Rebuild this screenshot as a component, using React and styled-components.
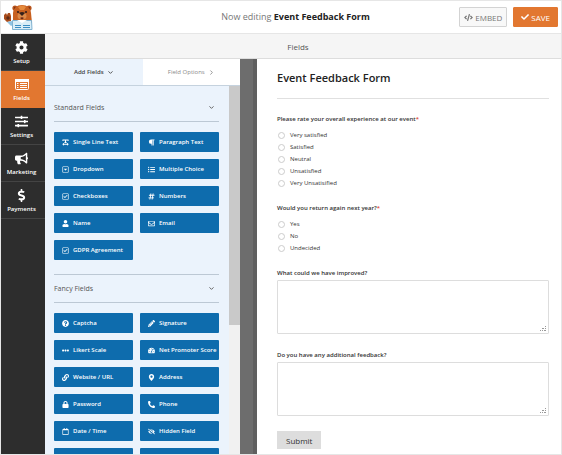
import React from 'react'
import styled, { createGlobalStyle } from 'styled-components'
import {
  FaBullhorn,
  FaCheck,
  FaCode,
  FaCog,
  FaDollarSign,
  FaEllipsisH,
  FaEyeSlash,
  FaHashtag,
  FaLink,
  FaListUl,
  FaLock,
  FaMapMarkerAlt,
  FaParagraph,
  FaPencilAlt,
  FaPhoneAlt,
  FaQuestionCircle,
  FaRegCalendar,
  FaRegCaretSquareDown,
  FaRegCheckSquare,
  FaRegEnvelope,
  FaSlidersH,
  FaTachometerAlt,
  FaTextWidth,
  FaUser,
} from 'react-icons/fa'
import { FiChevronDown, FiChevronRight } from 'react-icons/fi'


const GlobalStyle = createGlobalStyle`
  * {
    box-sizing: border-box;
  }

  body {
    margin: 0;
    font-family: 'Open Sans', 'Noto Sans', sans-serif;
    color: #444;
    background: #fff;
  }

  button, textarea {
    font-family: inherit;
    margin: 0;
  }
`

const Root = styled.div`
  display: flex;
  flex-direction: column;
  height: 100vh;
  border: 1px solid #e6e6e6;
  overflow: hidden;
`

const Header = styled.header`
  display: flex;
  align-items: center;
  flex: none;
  height: 33px;
  padding: 0 3px;
  border-bottom: 1px solid #e6e6e6;
`

const HeaderMain = styled.div`
  display: grid;
  grid-template-columns: 1fr auto 1fr;
  align-items: center;
  flex: 1;
`

const Editing = styled.div`
  grid-column: 2;
  font-size: 9px;
  line-height: 16px;
  color: #777;

  strong {
    color: #222;
    font-weight: 700;
  }
`

const Actions = styled.div`
  display: flex;
  justify-content: flex-end;
  gap: 6px;
`

const ActionButton = styled.button`
  display: flex;
  align-items: center;
  justify-content: center;
  gap: 2px;
  height: 20px;
  padding: 0 ${ props => props.$primary ? '7px' : '4px' };
  border: 1px solid ${ props => props.$primary ? '#e27730' : '#d3d3d3' };
  border-radius: 1px;
  background: ${ props => props.$primary ? '#e27730' : '#f8f8f8' };
  color: ${ props => props.$primary ? '#fff' : '#777' };
  font-size: 8px;
`

const Body = styled.div`
  display: flex;
  flex: 1;
  min-height: 0;
`

const Sidebar = styled.nav`
  flex: none;
  width: 44px;
  background: #2d2d2d;
`

const SidebarLink = styled.a`
  display: flex;
  flex-direction: column;
  align-items: center;
  gap: 2px;
  height: 37px;
  padding: 7px 3px 0 0;
  border-bottom: 1px solid ${ props => props.$active ? '#e27730' : '#444' };
  background: ${ props => props.$active ? '#e27730' : 'transparent' };
  color: #fff;
  font-size: 6px;
  font-weight: 600;
  line-height: 10px;
  text-decoration: none;
`

const Main = styled.main`
  display: flex;
  flex-direction: column;
  flex: 1;
  min-width: 0;
`

const TitleBar = styled.div`
  flex: none;
  height: 25px;
  padding-right: 10px;
  border-bottom: 1px solid #ddd;
  background: #f5f5f5;
  color: #555;
  font-size: 8px;
  line-height: 25px;
  text-align: center;
`

const Columns = styled.div`
  display: flex;
  flex: 1;
  min-height: 0;
`

const Panel = styled.section`
  display: flex;
  flex-direction: column;
  flex: none;
  width: 195px;
`

const Tabs = styled.div`
  display: grid;
  grid-template-columns: 1fr 1fr;
  flex: none;
  height: 27px;
  border-bottom: 1px solid #c5d2de;
`

const Tab = styled.button`
  display: flex;
  align-items: center;
  justify-content: center;
  gap: 3px;
  padding: 0;
  border: 0;
  background: ${ props => props.$active ? '#ebf3fc' : '#fff' };
  color: ${ props => props.$active ? '#444' : '#8a8a8a' };
  font-size: 6px;
  font-weight: ${ props => props.$active ? 600 : 400 };
`

const PanelBody = styled.div`
  display: flex;
  flex: 1;
  min-height: 0;
  background: #ebf3fc;
`

const Groups = styled.div`
  flex: 1;
  min-width: 0;
  padding: 8px 10px 0 9px;
  overflow: hidden;
`

const Scrollbar = styled.div`
  flex: none;
  width: 11px;
  background: #f1f1f1;
`

const Thumb = styled.div`
  height: 65%;
  background: #c9c9c9;
`

const Group = styled.div`
  & + & {
    margin-top: 14px;
    border-top: 1px solid #bcc8d4;
  }
`

const GroupTitle = styled.div`
  display: flex;
  align-items: center;
  justify-content: space-between;
  height: 28px;
  padding-right: 4px;
  border-bottom: 1px solid #bcc8d4;
  color: #555;
  font-size: 7px;
`

const FieldGrid = styled.div`
  display: grid;
  grid-template-columns: repeat(2, minmax(0, 1fr));
  grid-auto-rows: 20px;
  gap: 7px;
  padding-top: 10px;
`

const FieldButton = styled.button`
  display: flex;
  align-items: center;
  gap: 4px;
  padding: 0 0 0 8px;
  border: 0;
  border-radius: 1px;
  background: #0e6cad;
  color: #fff;
  font-size: 6px;
  font-weight: 600;
  white-space: nowrap;

  svg {
    flex: none;
  }
`

const Divider = styled.div`
  flex: none;
  width: 17px;
  border-right: 4px solid #5f5f5f;
  background: #6d6d6d;
`

const Preview = styled.form`
  flex: 1;
  min-width: 0;
  padding: 0 12px 0 20px;
  color: #333;
  overflow: hidden;
`

const FormTitle = styled.h1`
  height: 40px;
  margin: 0 0 14px;
  border-bottom: 1px solid #e0e0e0;
  color: #222;
  font-size: 11px;
  font-weight: 600;
  line-height: 38px;
`

const Question = styled.fieldset`
  margin: 0 0 13px;
  padding: 0;
  border: 0;
`

const Legend = styled.legend`
  padding: 0;
  margin-bottom: 4px;
  font-size: 6px;
  font-weight: 600;
  line-height: 12px;
`

const Required = styled.span`
  color: #e0402a;
`

const Choice = styled.label`
  display: flex;
  align-items: center;
  gap: 5px;
  height: 12px;
  font-size: 6px;
  line-height: 12px;
`

const Radio = styled.input`
  appearance: none;
  width: 7px;
  height: 7px;
  margin: 0 0 0 1px;
  border: 1px solid #ccc;
  border-radius: 50%;
  background: #fff;
`

const TextField = styled.div`
  position: relative;
  margin-bottom: 15px;

  label {
    display: block;
    margin-bottom: 1px;
    font-size: 6px;
    font-weight: 600;
    line-height: 12px;
  }

  textarea {
    display: block;
    width: 100%;
    height: 54px;
    border: 1px solid #ddd;
    border-radius: 1px;
    resize: none;
  }

  svg {
    position: absolute;
    right: 2px;
    bottom: 2px;
  }
`

const Submit = styled.button`
  display: block;
  height: 18px;
  padding: 0 9px;
  border: 0;
  background: #ddd;
  color: #333;
  font-size: 8px;
`

const Logo = () => (
  <svg width="29" height="27" viewBox="0 0 29 27">
    <circle cx="11" cy="4" r="2.6" fill="#b9541c" />
    <circle cx="25" cy="4" r="2.6" fill="#b9541c" />
    <circle cx="11" cy="4" r="1.2" fill="#7c3517" />
    <circle cx="25" cy="4" r="1.2" fill="#7c3517" />
    <path d="M9 19 9 9Q10 1 18 1T27 9L28 19Z" fill="#c8601f" />
    <path d="M14 3Q18 0 22 3L20 6H16Z" fill="#e58a3c" />
    <ellipse cx="18" cy="12" rx="4.500" ry="3.500" fill="#dc8a48" />
    <circle cx="14" cy="8" r="1.1" fill="#35201a" />
    <circle cx="22" cy="8" r="1.1" fill="#35201a" />
    <path d="M15 9Q18 7 21 9L18 12Z" fill="#35201a" />
    <path d="M16 14Q18 12.500 20 14L18 15.500Z" fill="#6b2716" />
    <path d="M0 11 2 9 3 11 4 9 6 9 7 12 7 17 3 18 0 15Z" fill="#a94c1b" />
    <circle cx="4" cy="14" r="1.700" fill="#5f2c17" />
    <path d="M3 18 8 17 9 21 7 22Z" fill="#8fc3e2" />
    <path d="M8.500 16.500 27.500 16.500 28 25.500 8.500 25.500Z" fill="#d9edf7" stroke="#7fb2d2" />
    <path d="M13 16 18 19 23 16Z" fill="#fff" />
    <path d="M11 21.500H17M19 21.500H26M11 23.500H17M19 23.500H26" stroke="#3b8dc3" />
  </svg>
)

const Grip = () => (
  <svg width="7" height="7" fill="#999" shapeRendering="crispEdges">
    <path d="M0 5h1v1H0zM2 5h1v1H2zM4 5h1v1H4zM5 5h1v1H5zM2 3h1v1H2zM3 3h1v1H3zM5 3h1v1H5zM5 1h1v1H5z" />
  </svg>
)

const ListBox = () => (
  <svg width="14" height="13" viewBox="0 0 14 13" fill="none">
    <rect x="0.500" y="1.500" width="13" height="10" rx="1" stroke="#fff" />
    <path d="M0 1h14v3H0z" fill="#fff" />
    <path d="M2 5.500h1.500M2 7.500h1.500M2 9.500h1.500M5 5.500h7M5 7.500h7M5 9.500h7" stroke="#fff" />
  </svg>
)

const sections = [
  { name: 'Setup', icon: FaCog },
  { name: 'Fields', icon: ListBox, active: true },
  { name: 'Settings', icon: FaSlidersH },
  { name: 'Marketing', icon: FaBullhorn },
  { name: 'Payments', icon: FaDollarSign },
]

const groups = [
  {
    title: 'Standard Fields',
    fields: [
      ['Single Line Text', FaTextWidth],
      ['Paragraph Text', FaParagraph],
      ['Dropdown', FaRegCaretSquareDown],
      ['Multiple Choice', FaListUl],
      ['Checkboxes', FaRegCheckSquare],
      ['Numbers', FaHashtag],
      ['Name', FaUser],
      ['Email', FaRegEnvelope],
      ['GDPR Agreement', FaRegCheckSquare],
    ],
  },
  {
    title: 'Fancy Fields',
    fields: [
      ['Captcha', FaQuestionCircle],
      ['Signature', FaPencilAlt],
      ['Likert Scale', FaEllipsisH],
      ['Net Promoter Score', FaTachometerAlt],
      ['Website / URL', FaLink],
      ['Address', FaMapMarkerAlt],
      ['Password', FaLock],
      ['Phone', FaPhoneAlt],
      ['Date / Time', FaRegCalendar],
      ['Hidden Field', FaEyeSlash],
      ['', null],
      ['', null],
    ],
  },
]

const questions = [
  {
    id: 'rating',
    text: 'Please rate your overall experience at our event',
    choices: ['Very satisfied', 'Satisfied', 'Neutral', 'Unsatisfied', 'Very Unsatisified'],
  },
  {
    id: 'return',
    text: 'Would you return again next year?',
    choices: ['Yes', 'No', 'Undecided'],
  },
]

const App = () => {
  return <Root>
    <GlobalStyle />
    <Header>
      <Logo />
      <HeaderMain>
        <Editing>Now editing <strong>Event Feedback Form</strong></Editing>
        <Actions>
          <ActionButton type="button"><FaCode size={9} />EMBED</ActionButton>
          <ActionButton type="button" $primary><FaCheck size={8} />SAVE</ActionButton>
        </Actions>
      </HeaderMain>
    </Header>
    <Body>
      <Sidebar>
        {sections.map(({ name, icon: Icon, active }) => (
          <SidebarLink key={name} href="#" $active={active}>
            <Icon size={13} />
            {name}
          </SidebarLink>
        ))}
      </Sidebar>
      <Main>
        <TitleBar>Fields</TitleBar>
        <Columns>
          <Panel>
            <Tabs>
              <Tab type="button" $active>Add Fields <FiChevronDown size={7} strokeWidth={3} /></Tab>
              <Tab type="button">Field Options <FiChevronRight size={7} strokeWidth={3} /></Tab>
            </Tabs>
            <PanelBody>
              <Groups>
                {groups.map(group => (
                  <Group key={group.title}>
                    <GroupTitle>
                      {group.title}
                      <FiChevronDown size={7} strokeWidth={3} />
                    </GroupTitle>
                    <FieldGrid>
                      {group.fields.map(([name, Icon], i) => (
                        <FieldButton key={i} type="button">
                          {Icon && <Icon size={7} />}
                          {name}
                        </FieldButton>
                      ))}
                    </FieldGrid>
                  </Group>
                ))}
              </Groups>
              <Scrollbar><Thumb /></Scrollbar>
            </PanelBody>
          </Panel>
          <Divider />
          <Preview>
            <FormTitle>Event Feedback Form</FormTitle>
            {questions.map(question => (
              <Question key={question.id}>
                <Legend>{question.text}<Required>*</Required></Legend>
                {question.choices.map(choice => (
                  <Choice key={choice}>
                    <Radio type="radio" name={question.id} />
                    {choice}
                  </Choice>
                ))}
              </Question>
            ))}
            <TextField>
              <label htmlFor="improve">What could we have improved?</label>
              <textarea id="improve" />
              <Grip />
            </TextField>
            <TextField>
              <label htmlFor="feedback">Do you have any additional feedback?</label>
              <textarea id="feedback" />
              <Grip />
            </TextField>
            <Submit type="button">Submit</Submit>
          </Preview>
        </Columns>
      </Main>
    </Body>
  </Root>
}

export default App
